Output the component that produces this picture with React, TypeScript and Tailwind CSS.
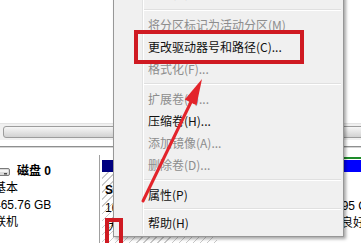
import React from 'react';

type MenuEntry = { label: string; disabled?: boolean; partial?: boolean } | 'sep' | 'sep-sm';

const menuEntries: MenuEntry[] = [
    { label: '打开(O)', partial: true },
    'sep',
    { label: '将分区标记为活动分区(M)', disabled: true },
    { label: '更改驱动器号和路径(C)...' },
    { label: '格式化(F)...', disabled: true },
    'sep',
    { label: '扩展卷(X)...', disabled: true },
    { label: '压缩卷(H)...' },
    { label: '添加镜像(A)...', disabled: true },
    { label: '删除卷(D)...', disabled: true },
    'sep',
    { label: '属性(P)' },
    'sep-sm',
    { label: '帮助(H)' },
];

const ContextMenu: React.FC = () => (
    <div className="absolute left-[113px] top-[-19px] w-[231px] border border-[#979797] bg-[#f0f0f0] p-[2px] shadow-[2px_2px_3px_rgba(0,0,0,0.35)] font-['Noto_Sans_CJK_SC',sans-serif] text-[12px]">
        <div className="flex">
            {/* icon gutter */}
            <div className="w-[27px] shrink-0 border-r border-[#e2e3e3] shadow-[1px_0_0_#ffffff]" />
            <div className="flex-1 pl-[1px]">
                {menuEntries.map((entry, i) =>
                    entry === 'sep' || entry === 'sep-sm' ? (
                        <div
                            key={i}
                            className={`flex items-center ${entry === 'sep' ? 'h-[8px]' : 'h-[6px]'}`}
                        >
                            <div className="h-[2px] w-full border-t border-[#e0e0e0] border-b border-b-white" />
                        </div>
                    ) : (
                        <div
                            key={i}
                            className={`h-[22px] pl-[4px] whitespace-nowrap ${entry.partial ? 'leading-[17px]' : 'leading-[22px]'} ${entry.disabled ? 'text-[#8d8d8d]' : 'text-[#111111]'}`}
                        >
                            {entry.label}
                        </div>
                    )
                )}
            </div>
        </div>
    </div>
);

const DiskIcon: React.FC = () => (
    <svg width="20" height="10" viewBox="0 0 20 10" className="-ml-[4px] shrink-0">
        <rect x="0.5" y="1.5" width="19" height="7" rx="1.5" fill="#d9d9d9" stroke="#7a7a7a" />
        <rect x="2" y="3" width="16" height="2" fill="#f4f4f4" />
        <rect x="14" y="6" width="3" height="1.5" fill="#4a4a4a" />
    </svg>
);

export default function App() {
    return (
        <div className="relative w-[361px] h-[243px] overflow-hidden bg-white font-['Liberation_Sans','Noto_Sans_CJK_SC',sans-serif] text-[12px] text-black">
            {/* volume list (empty part) */}
            <div className="h-[123px] bg-white" />

            {/* horizontal scrollbar */}
            <div className="h-[17px] overflow-hidden bg-[#f0f0f0] border-t border-[#e3e3e3] py-[2px] pl-[3px]">
                <div className="h-full w-[420px] rounded-[3px] border border-[#9c9c9c] bg-gradient-to-b from-[#f6f6f6] to-[#d2d2d2]" />
            </div>
            <div className="h-[6px] bg-white" />
            <div className="h-[2px] border-t border-[#8e8f8f] border-b border-b-[#d5d5d5]" />

            {/* graphical disk view */}
            <div className="mt-[7px] flex h-[88px]">
                {/* disk label column */}
                <div className="w-[100px] shrink-0 border-r border-[#a0a0a0] pt-[8px] leading-[17px]">
                    <div className="-ml-[6px] flex flex-col">
                        <div className="flex items-center gap-[7px] font-bold">
                            <DiskIcon />
                            <span>磁盘 0</span>
                        </div>
                        <div>基本</div>
                        <div>465.76 GB</div>
                        <div>联机</div>
                    </div>
                </div>

                {/* partitions */}
                <div className="flex flex-1 gap-[3px] pl-[2px] pt-[2px] overflow-hidden">
                    <div className="w-[115px] shrink-0 pt-[3px] flex flex-col">
                        <div className="h-[12px] bg-[#000080]" />
                        <div className="flex-1 bg-[repeating-linear-gradient(135deg,#ffffff_0px,#ffffff_4px,#c9c9c9_4px,#c9c9c9_5px)] pl-[3px] pt-[9px] leading-[18px] whitespace-nowrap overflow-hidden">
                            <div className="font-bold">SYSTEM</div>
                            <div>100 MB NTFS</div>
                            <div>状态良好 (系统, 活动, 主分区)</div>
                        </div>
                    </div>
                    <div className="flex-1 flex flex-col border-t-2 border-[#1e8c2a] pt-[1px]">
                        <div className="h-[12px] bg-[#0000ff]" />
                        <div className="flex-1 bg-white pl-[105px] pt-[9px] leading-[17px] whitespace-nowrap overflow-hidden">
                            <div className="-ml-[1px]">(C:)</div>
                            <div>29.95 GB NTFS</div>
                            <div className="-ml-[8px]">状态良好 (启动, 页面文件)</div>
                        </div>
                    </div>
                </div>
            </div>

            <ContextMenu />

            {/* annotations */}
            <div className="absolute left-[134px] top-[30px] w-[170px] h-[34px] border-[4px] border-[#cf1a22]" />
            <div className="absolute left-[105px] top-[218px] w-[18px] h-[32px] border-[4px] border-[#cf1a22]" />
            <svg className="absolute inset-0 pointer-events-none" width="361" height="243" viewBox="0 0 361 243">
                <line x1="143" y1="201" x2="191" y2="102" stroke="#e3242b" strokeWidth="3" strokeLinecap="round" />
                <polygon points="202,79 196.5,105.2 184.8,99.6" fill="#e3242b" />
            </svg>
        </div>
    );
}
